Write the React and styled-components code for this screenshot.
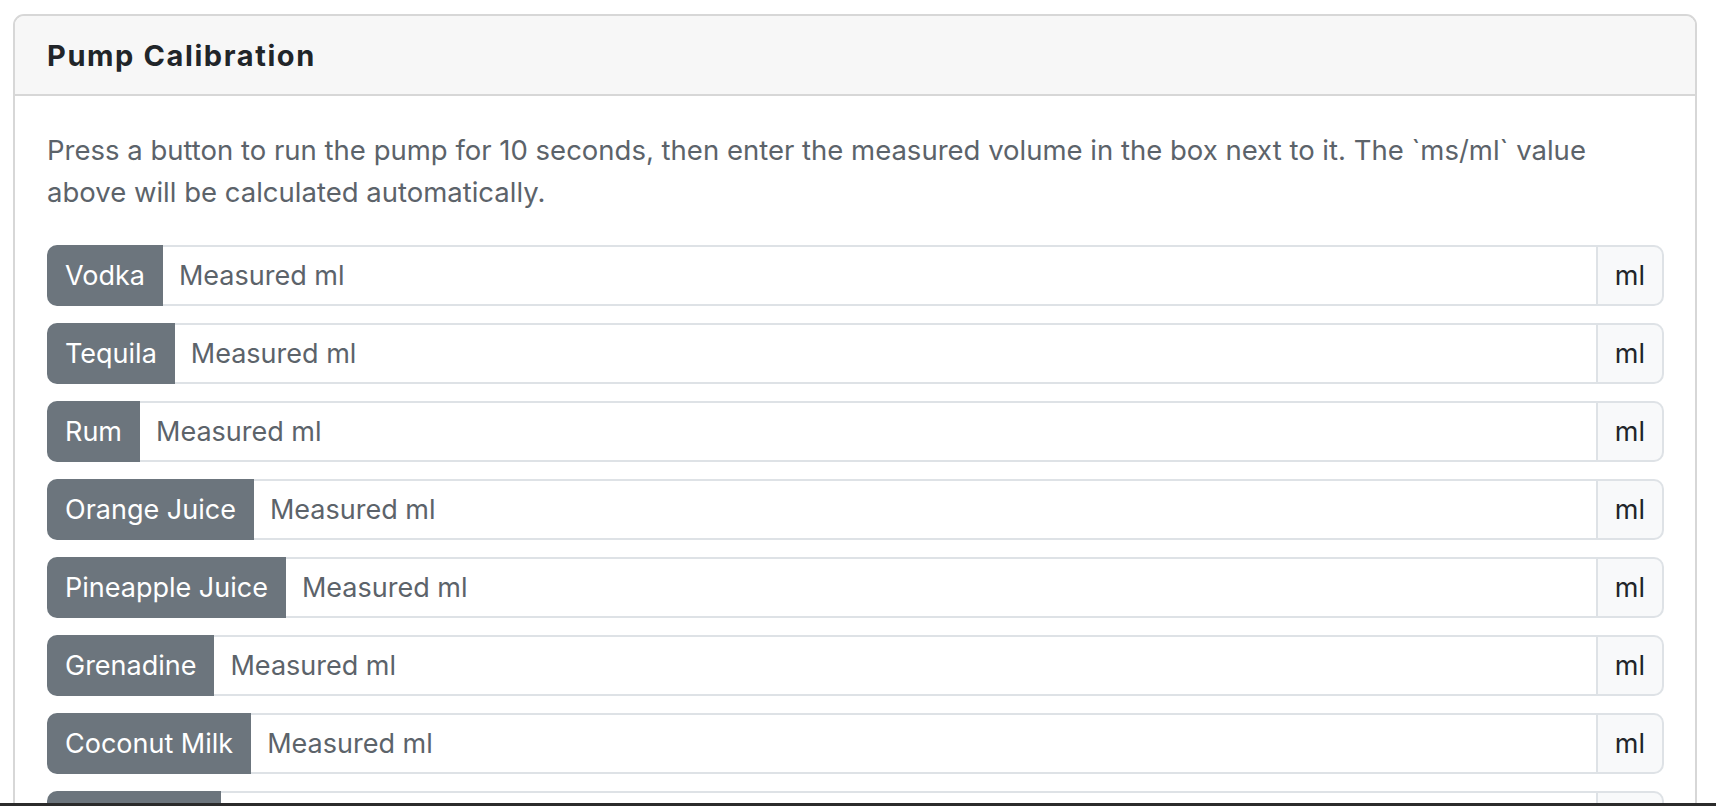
import React from 'react'
import styled, { createGlobalStyle } from 'styled-components'

const GlobalStyle = createGlobalStyle`
  html, body {
    margin: 0;
    padding: 0;
    background: #fff;
    height: 806px;
    overflow: hidden;
  }
  body {
    font-family: Inter, "Liberation Sans", Arial, sans-serif;
    color: #212529;
  }
`;

const Page = styled.div`
  padding: 14px 19px 0 13px;
`;

const Card = styled.div`
  border: 2px solid #d7d7d7;
  border-radius: 11px;
  background: #fff;
  overflow: hidden;
`;

const CardHeader = styled.div`
  background: #f7f7f7;
  border-bottom: 2px solid #d7d7d7;
  height: 80px;
  display: flex;
  align-items: center;
  padding: 0 32px;
  box-sizing: border-box;
`;

const Title = styled.h5`
  margin: 0;
  font-size: 29px;
  font-weight: 700;
  color: #212529;
  letter-spacing: 1.6px;
`;

const CardBody = styled.div`
  padding: 33px 31px 0 32px;
`;

const Intro = styled.p`
  margin: 0 60px 32px 0;
  font-size: 27.5px;
  line-height: 42px;
  color: #5c636a;
`;

const Group = styled.div`
  display: flex;
  align-items: stretch;
  height: 61px;
  margin-bottom: 17px;
`;

const Label = styled.span`
  display: flex;
  align-items: center;
  padding: 0 18px;
  background: #6c757d;
  color: #fff;
  font-size: 27px;
  border-radius: 10px 0 0 10px;
  white-space: nowrap;
`;

const Input = styled.input`
  flex: 1;
  min-width: 0;
  border: 2px solid #dee2e6;
  border-left: none;
  border-right: none;
  padding: 0 16px;
  font-family: inherit;
  font-size: 27px;
  color: #212529;
  background: #fff;
  outline: none;
  &::placeholder {
    color: #5c636a;
  }
`;

const Unit = styled.span`
  display: flex;
  align-items: center;
  padding: 0 17px;
  background: #f8f9fa;
  border: 2px solid #dee2e6;
  border-radius: 0 10px 10px 0;
  font-size: 27px;
  color: #212529;
`;

const WindowEdge = styled.div`
  position: fixed;
  left: 0;
  right: 0;
  bottom: 0;
  height: 3px;
  background: #2b2b2b;
`;

const pumps = [
  'Vodka',
  'Tequila',
  'Rum',
  'Orange Juice',
  'Pineapple Juice',
  'Grenadine',
  'Coconut Milk',
  'Lime Juice',
]

export default function App() {
  return (
    <>
      <GlobalStyle />
      <Page>
        <Card>
          <CardHeader>
            <Title>Pump Calibration</Title>
          </CardHeader>
          <CardBody>
            <Intro>
              Press a button to run the pump for 10 seconds, then enter the measured volume in the box next to it. The `ms/ml` value above will be calculated automatically.
            </Intro>
            {pumps.map((name) => (
              <Group key={name}>
                <Label>{name}</Label>
                <Input type="number" placeholder="Measured ml" />
                <Unit>ml</Unit>
              </Group>
            ))}
          </CardBody>
        </Card>
      </Page>
      <WindowEdge />
    </>
  )
}
